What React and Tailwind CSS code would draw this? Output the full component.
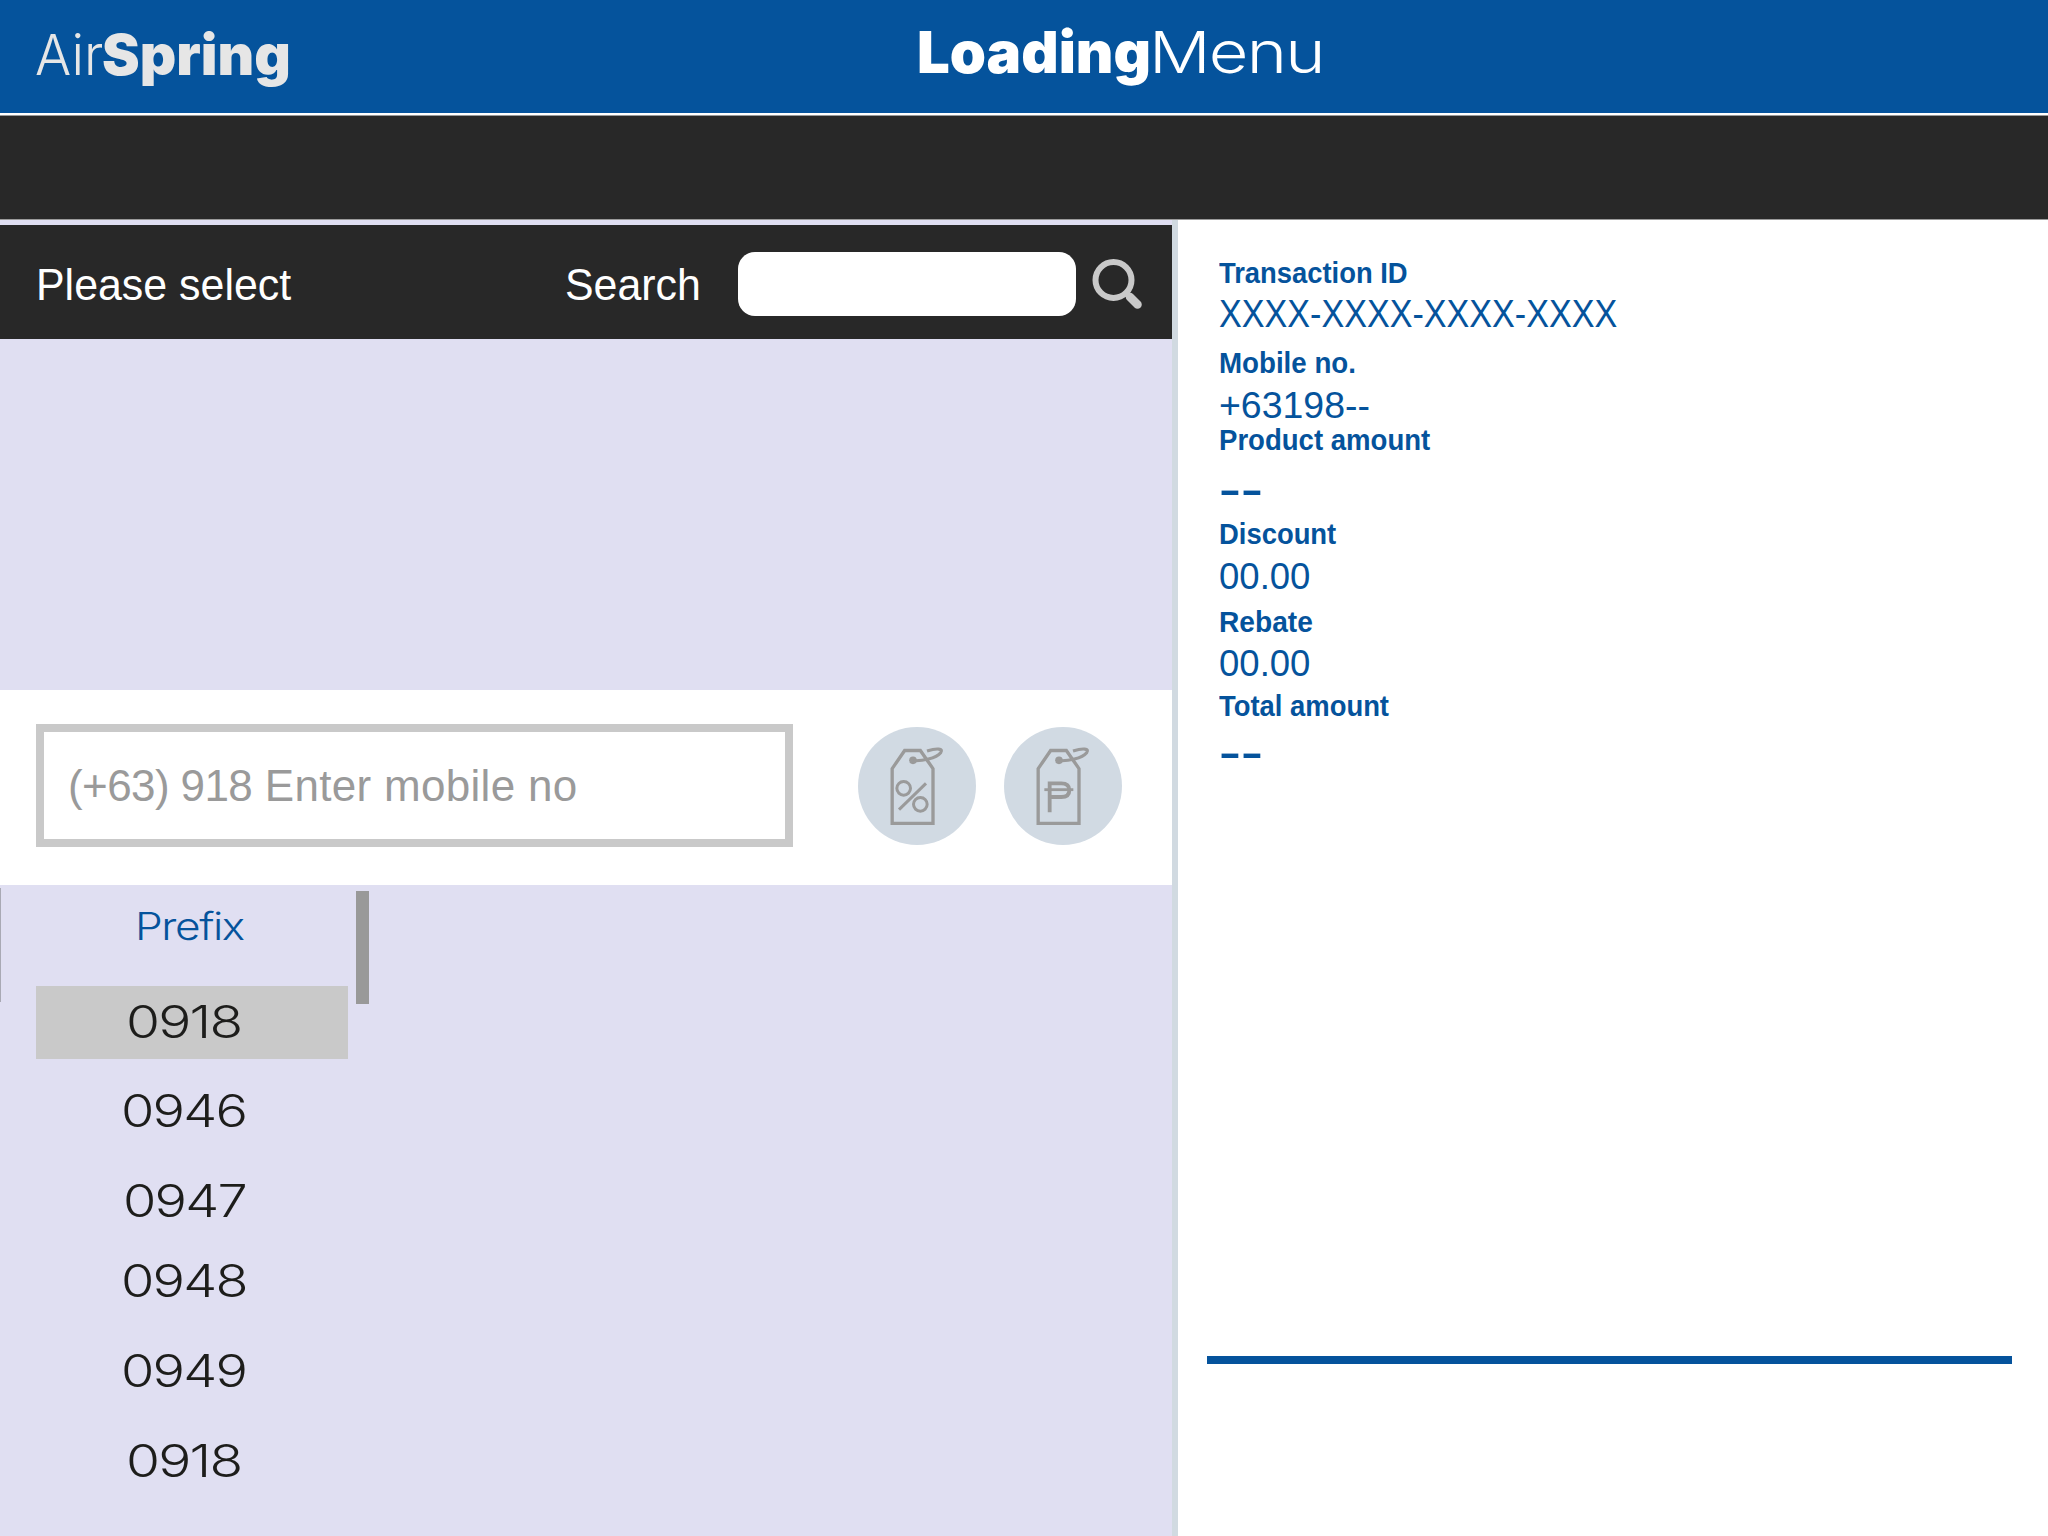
import React from "react";

const prefixes = [
  { number: "0918", row: "mt-[27px] h-[73px] leading-[71px] bg-[#c9c9c9]", text: "ml-[90px] scale-x-[1.225]" },
  { number: "0946", row: "mt-[27px] h-[50px] leading-[50px]", text: "ml-[85px] scale-x-[1.2]" },
  { number: "0947", row: "mt-[40px] h-[50px] leading-[50px]", text: "ml-[87px] scale-x-[1.2]" },
  { number: "0948", row: "mt-[30px] h-[50px] leading-[50px]", text: "ml-[85px] scale-x-[1.2]" },
  { number: "0949", row: "mt-[40px] h-[50px] leading-[50px]", text: "ml-[85px] scale-x-[1.2]" },
  { number: "0918", row: "mt-[40px] h-[50px] leading-[50px]", text: "ml-[90px] scale-x-[1.225]" },
];

const details = [
  { label: "Transaction ID", labelClass: "scale-x-[0.944]", value: "XXXX-XXXX-XXXX-XXXX", valueClass: "mt-[6px] leading-[38px] text-[39px] scale-x-[0.875]" },
  { label: "Mobile no.", labelClass: "mt-[14px] scale-x-[0.955]", value: "+63198--", valueClass: "mt-[7px] leading-[40px] -mb-[2px] text-[36px] scale-x-[1.04]" },
  { label: "Product amount", labelClass: "scale-x-[0.95]", value: "--", valueClass: "mt-[13px] leading-[42px] -mb-[4px] text-[36px] font-bold scale-x-[1.83]" },
  { label: "Discount", labelClass: "mt-[11px] scale-x-[0.945]", value: "00.00", valueClass: "mt-[7px] leading-[40px] -mb-[2px] text-[36px] scale-x-[1.015]" },
  { label: "Rebate", labelClass: "mt-[11px] scale-x-[0.97]", value: "00.00", valueClass: "mt-[6px] leading-[40px] -mb-[2px] text-[36px] scale-x-[1.015]" },
  { label: "Total amount", labelClass: "mt-[8px] scale-x-[0.945]", value: "--", valueClass: "mt-[10px] leading-[42px] -mb-[4px] text-[36px] font-bold scale-x-[1.83]" },
];

function SearchIcon() {
  return (
    <svg className="h-[54px] w-[54px]" viewBox="0 0 54 54" stroke="#c9c9c9" fill="none">
      <circle cx="22.500" cy="24" r="18" strokeWidth="6" />
      <path d="M39 41L46.500 48.500" strokeWidth="8.500" strokeLinecap="round" />
      <path d="M34.500 36.500L40 42" strokeWidth="6" />
    </svg>
  );
}

function TagIcon({ children }) {
  return (
    <svg className="h-[118px] w-[118px]" viewBox="0 0 354 354" fill="none" stroke="#9a9a9a" strokeWidth="10">
      <path d="M102.500 289V125L140 70.500H187L225 125V289Z" />
      <circle cx="165" cy="100" r="11.500" fill="#9a9a9a" stroke="none" />
      <path d="M165 101C192 103 234 94 248 77C258 64 236 63 207 72" strokeWidth="9.500" />
      {children}
    </svg>
  );
}

function RoundButton({ children, className }) {
  return (
    <button className={"flex size-[118px] items-center justify-center rounded-full bg-[#d1dae3] " + className}>
      {children}
    </button>
  );
}

export default function App() {
  return (
    <div className="flex h-[1536px] w-[2048px] flex-col overflow-hidden bg-white font-['Liberation_Sans',sans-serif]">
      <header className="flex h-[113px] items-start whitespace-nowrap bg-[#05539c] font-['Inter',sans-serif]">
        <div className="flex w-[917px] pl-[35px] text-[56px] leading-[111px] text-[#e6e6e6]">
          <span className="w-[67px] origin-left scale-x-[0.96] font-light">Air</span>
          <span className="origin-left scale-x-[1.01] font-black">Spring</span>
        </div>
        <h1 className="flex text-[58px] leading-[105px] text-white">
          <span className="w-[232px] font-black">Loading</span>
          <span className="origin-left scale-x-[1.18] font-light tracking-[-1.5px]">Menu</span>
        </h1>
      </header>
      <div className="mt-[2px] h-[105px] border-y border-[#9a9a9a] bg-[#282828]" />

      <div className="flex flex-1">
        <main className="flex w-[1178px] flex-col border-r-[6px] border-[#d1dae1] bg-[#e0dff2]">
          <section className="mt-[5px] flex h-[114px] items-start whitespace-nowrap bg-[#282828] pl-[36px] text-[44px] leading-[120px] text-white">
            <span className="w-[529px] origin-left scale-x-[0.975]">Please select</span>
            <span className="w-[173px] origin-left scale-x-[0.975]">Search</span>
            <div className="mt-[27px] h-[64px] w-[338px] rounded-[17px] bg-white" />
            <div className="ml-[15px] mt-[31px]">
              <SearchIcon />
            </div>
          </section>

          <section className="mt-[351px] flex h-[195px] items-start bg-white pl-[36px]">
            <div className="mt-[34px] h-[123px] w-[757px] whitespace-nowrap border-8 border-[#c9c9c9] pl-[24px] text-[44px] leading-[108px] text-[#9a9a9a]">
              <span className="tracking-[-0.6px]">(+63) 918 </span>
              <span className="ml-px tracking-[0.3px]">Enter mobile no</span>
            </div>
            <RoundButton className="ml-[64.5px] mt-[37px]">
              <TagIcon>
                <circle cx="137" cy="184" r="20.500" strokeWidth="9" />
                <circle cx="187" cy="232" r="20.500" strokeWidth="9" />
                <path d="M204 169L123 248" strokeWidth="9" />
              </TagIcon>
            </RoundButton>
            <RoundButton className="ml-[28px] mt-[37px]">
              <TagIcon>
                <path d="M137 256V169H172Q196 169 196 189.500Q196 210 172 210H137" strokeWidth="11.500" />
                <path d="M121 188H208" strokeWidth="8.500" />
              </TagIcon>
            </RoundButton>
          </section>

          <section className="flex flex-1 items-start font-['Inter',sans-serif]">
            <div className="mt-[3px] h-[114px] w-px bg-[#a9a9b4]" />
            <div className="ml-[35px] w-[312px] whitespace-nowrap text-[45px] font-light tracking-[-1.5px] text-[#1d1d1b]">
              <div className="mt-[14px] h-[60px] pl-[99px] text-[38px] leading-[55px] text-[#05539c]">
                <span className="inline-block origin-left scale-x-[1.16] tracking-[-1.2px]">Prefix</span>
              </div>
              {prefixes.map((p, i) => (
                <div key={i} className={p.row}>
                  <span className={"inline-block origin-left " + p.text}>{p.number}</span>
                </div>
              ))}
            </div>
            <div className="ml-[8px] mt-[6px] h-[113px] w-[13px] bg-[#999999]" />
          </section>
        </main>

        <aside className="flex flex-1 flex-col pl-[41px] pt-[37px] text-[#05539c]">
          <dl className="flex h-[1099px] flex-col items-start whitespace-nowrap">
            {details.map((d) => (
              <React.Fragment key={d.label}>
                <dt className={"origin-left text-[29px] font-bold leading-[32px] " + d.labelClass}>{d.label}</dt>
                <dd className={"origin-left " + d.valueClass}>{d.value}</dd>
              </React.Fragment>
            ))}
          </dl>
          <div className="-ml-[12px] h-[8px] w-[805px] bg-[#05539c]" />
        </aside>
      </div>
    </div>
  );
}
